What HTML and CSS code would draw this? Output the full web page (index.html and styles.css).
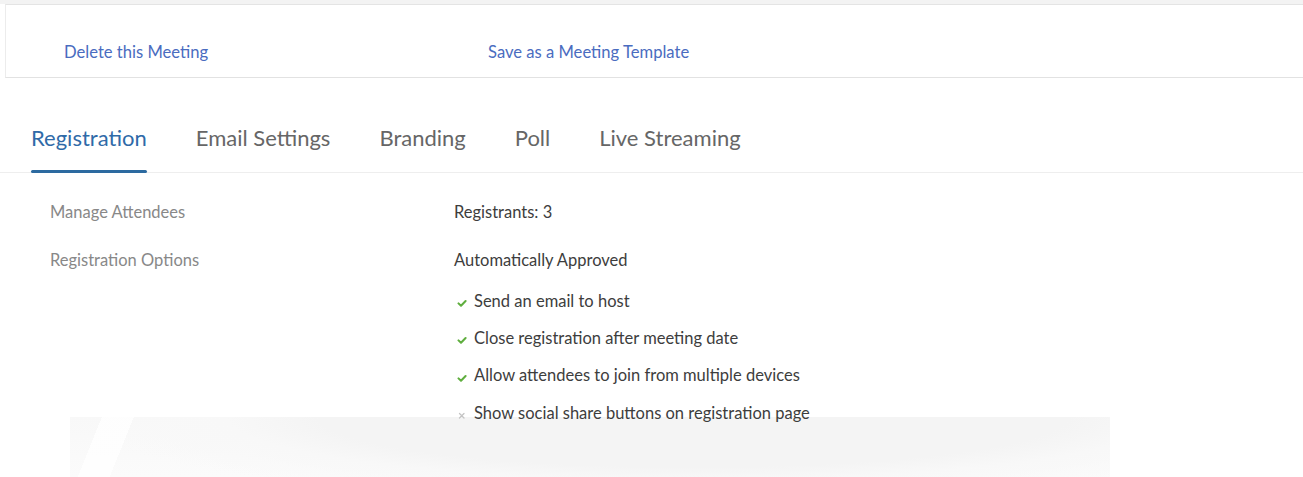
FILE: index.html
```html
<!DOCTYPE html>
<html lang="en">
<head>
<meta charset="utf-8">
<title>Meeting Registration</title>
<link rel="stylesheet" href="styles.css">
</head>
<body>
<div class="page">
  <div class="top-strip"></div>
  <div class="action-bar">
    <a class="action-link action-delete" href="#">Delete this Meeting</a>
    <a class="action-link action-template" href="#">Save as a Meeting Template</a>
  </div>

  <nav class="tabs">
    <a class="tab tab-active" href="#">Registration</a>
    <a class="tab" href="#">Email Settings</a>
    <a class="tab" href="#">Branding</a>
    <a class="tab" href="#">Poll</a>
    <a class="tab" href="#">Live Streaming</a>
  </nav>

  <section class="details">
    <div class="row">
      <div class="row-label">Manage Attendees</div>
      <div class="row-value">Registrants: 3</div>
    </div>
    <div class="row">
      <div class="row-label">Registration Options</div>
      <div class="row-value">
        <div>Automatically Approved</div>
        <ul class="options">
          <li class="option option-on">
            <svg class="mark" viewBox="0 0 10 10" width="10" height="10"><path d="M1.5 5.4 L4 7.8 L8.6 3" fill="none" stroke="#5fae3e" stroke-width="2" stroke-linecap="round" stroke-linejoin="round"/></svg>
            <span>Send an email to host</span>
          </li>
          <li class="option option-on">
            <svg class="mark" viewBox="0 0 10 10" width="10" height="10"><path d="M1.5 5.4 L4 7.8 L8.6 3" fill="none" stroke="#5fae3e" stroke-width="2" stroke-linecap="round" stroke-linejoin="round"/></svg>
            <span>Close registration after meeting date</span>
          </li>
          <li class="option option-on">
            <svg class="mark" viewBox="0 0 10 10" width="10" height="10"><path d="M1.5 5.4 L4 7.8 L8.6 3" fill="none" stroke="#5fae3e" stroke-width="2" stroke-linecap="round" stroke-linejoin="round"/></svg>
            <span>Allow attendees to join from multiple devices</span>
          </li>
          <li class="option option-off">
            <svg class="mark" viewBox="0 0 10 10" width="10" height="10"><path d="M2.5 3.5 L7 8 M7 3.5 L2.5 8" fill="none" stroke="#c4c4c4" stroke-width="1.3" stroke-linecap="round"/></svg>
            <span>Show social share buttons on registration page</span>
          </li>
        </ul>
      </div>
    </div>
  </section>

  <div class="backdrop"></div>
</div>
</body>
</html>
```

FILE: styles.css
```css
* { box-sizing: border-box; }

html, body {
  margin: 0;
  padding: 0;
  background: #ffffff;
}

body {
  font-family: Lato, "Open Sans", "Liberation Sans", sans-serif;
  color: #444;
  overflow: hidden;
}

.page {
  width: 1303px;
  height: 477px;
  position: relative;
  z-index: 0;
}

.top-strip {
  height: 4px;
  background: #f3f3f3;
}

/* meeting actions bar */
.action-bar {
  height: 74px;
  margin-left: 5px;
  border-top: 1px solid #e4e4e4;
  border-left: 1px solid #ececec;
  border-bottom: 1px solid #e2e2e2;
  display: flex;
  align-items: center;
  padding-top: 22px;
  padding-left: 58px;
}

.action-link {
  font-size: 16.6px;
  color: #4a6cc0;
  text-decoration: none;
  line-height: 20px;
}

.action-delete { width: 424px; }

/* tab strip */
.tabs {
  display: flex;
  gap: 49px;
  margin-top: 38px;
  padding-left: 31px;
  border-bottom: 1px solid #eeeeee;
}

.tab {
  font-size: 22px;
  color: #666;
  text-decoration: none;
  height: 56px;
  padding-top: 8px;
  position: relative;
}

.tab-active { color: #2f6aa8; }

.tab-active::after {
  content: "";
  position: absolute;
  left: 0;
  right: 0;
  bottom: -1px;
  height: 3px;
  border-radius: 2px;
  background: #2c6aa0;
}

/* settings rows */
.details {
  padding-left: 50px;
  padding-top: 29px;
  font-size: 16.5px;
}

.row {
  display: flex;
  margin-bottom: 28px;
}

.row-label {
  width: 404px;
  color: #888;
  line-height: 20px;
}

.row-value {
  color: #3d3d3d;
  line-height: 20px;
}

.options {
  list-style: none;
  margin: 12px 0 0;
  padding: 0;
}

.option {
  display: flex;
  align-items: center;
  height: 37.3px;
}

.option .mark {
  margin: 5px 7px 0 3px;
  flex: none;
}

.option span { color: #3d3d3d; }

/* faint watermark shape under the content */
.backdrop {
  position: absolute;
  left: 70px;
  width: 1040px;
  top: 417px;
  bottom: 0;
  background:
    linear-gradient(112deg, transparent 0 3%, rgba(255,255,255,0.8) 3% 6%, transparent 6% 100%),
    radial-gradient(ellipse 60% 140% at 60% 0%, #f4f4f4 0 60%, #f8f8f8 75%, rgba(250,250,250,0) 100%),
    linear-gradient(#f8f8f8, #fbfbfb);
  z-index: -1;
}
```
